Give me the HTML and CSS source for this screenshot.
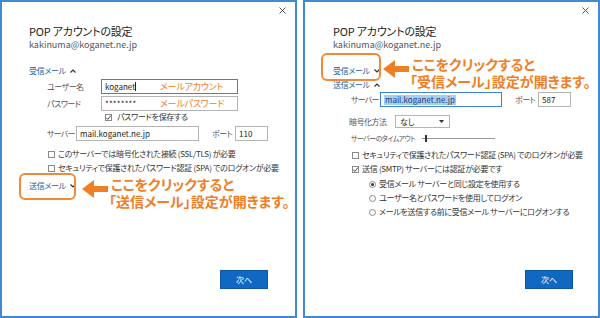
FILE: index.html
```html
<!DOCTYPE html>
<html lang="ja">
<head>
<meta charset="utf-8">
<link rel="stylesheet" href="styles.css">
</head>
<body>
<div class="screen">
  <section class="panel panel-left">
    <div class="titlebar">
      <svg class="close" width="7" height="7" viewBox="0 0 7 7"><path d="M0.5 0.5L6.5 6.5M6.5 0.5L0.5 6.5" stroke="#555" stroke-width="1" fill="none"/></svg>
    </div>
    <h1 class="title">POP アカウントの設定</h1>
    <p class="email">kakinuma@koganet.ne.jp</p>
    <div class="section-head mt16">受信メール
      <svg class="chev" width="6" height="4" viewBox="0 0 6 4"><path d="M0.5 3.5L3 1L5.5 3.5" stroke="#333" stroke-width="1.2" fill="none"/></svg>
    </div>
    <div class="row mt3">
      <span class="label lw-user">ユーザー名</span>
      <span class="input focus iw-user">koganet<span class="caret"></span><span class="note">メールアカウント</span></span>
    </div>
    <div class="row mt2">
      <span class="label lw-user">パスワード</span>
      <span class="input iw-user"><span class="dots">********</span><span class="note">メールパスワード</span></span>
    </div>
    <div class="check-row mt1 ind-save">
      <span class="box checked"><svg width="7" height="7" viewBox="0 0 7 7"><path d="M1 3.6L2.8 5.4L6 1.5" stroke="#333" stroke-width="0.9" fill="none"/></svg></span>
      <span class="ctext">パスワードを保存する</span>
    </div>
    <div class="row mt4">
      <span class="label lw-server">サーバー</span>
      <span class="input iw-server">mail.koganet.ne.jp</span>
      <span class="label port-label">ポート</span>
      <span class="input iw-port">110</span>
    </div>
    <div class="check-row mt8 ind-check">
      <span class="box"></span>
      <span class="ctext">このサーバーでは暗号化された接続 (SSL/TLS) が必要</span>
    </div>
    <div class="check-row mt4 ind-check">
      <span class="box"></span>
      <span class="ctext">セキュリティで保護されたパスワード認証 (SPA) でのログオンが必要</span>
    </div>
    <div class="section-head mt8">送信メール
      <svg class="chev" width="6" height="4" viewBox="0 0 6 4"><path d="M0.5 0.5L3 3L5.5 0.5" stroke="#333" stroke-width="1.2" fill="none"/></svg>
    </div>
    <div class="footer"><button class="next">次へ</button></div>

    <div class="callout-box cb-left"></div>
    <div class="callout co-left">
      <svg class="arrow" width="26" height="18" viewBox="0 0 26 18"><path d="M0 9L12 0V6H26V12H12V18Z" fill="#f07e26"/></svg>
      <div class="callout-text"><span class="l1">ここをクリックすると</span><span class="l2">「送信メール」設定が開きます。</span></div>
    </div>
  </section>

  <section class="panel panel-right">
    <div class="titlebar">
      <svg class="close" width="7" height="7" viewBox="0 0 7 7"><path d="M0.5 0.5L6.5 6.5M6.5 0.5L0.5 6.5" stroke="#555" stroke-width="1" fill="none"/></svg>
    </div>
    <h1 class="title">POP アカウントの設定</h1>
    <p class="email">kakinuma@koganet.ne.jp</p>
    <div class="section-head mt16">受信メール
      <svg class="chev" width="6" height="4" viewBox="0 0 6 4"><path d="M0.5 0.5L3 3L5.5 0.5" stroke="#333" stroke-width="1.2" fill="none"/></svg>
    </div>
    <div class="section-head mt4">送信メール
      <svg class="chev" width="6" height="4" viewBox="0 0 6 4"><path d="M0.5 3.5L3 1L5.5 3.5" stroke="#333" stroke-width="1.2" fill="none"/></svg>
    </div>
    <div class="row mt2">
      <span class="label lw-server">サーバー</span>
      <span class="input focus iw-server-r"><span class="sel">mail.koganet.ne.jp</span></span>
      <span class="label port-label">ポート</span>
      <span class="input iw-port">587</span>
    </div>
    <div class="row mt7 ind-enc">
      <span class="label lw-enc">暗号化方法</span>
      <span class="select">なし<svg width="5" height="3" viewBox="0 0 5 3"><path d="M0 0H5L2.5 3Z" fill="#333"/></svg></span>
    </div>
    <div class="row mt4 slider-row">
      <span class="label lw-timeout">サーバーのタイムアウト</span>
      <span class="slider"><span class="thumb"></span></span>
    </div>
    <div class="check-row mt7 ind-check">
      <span class="box"></span>
      <span class="ctext">セキュリティで保護されたパスワード認証 (SPA) でのログオンが必要</span>
    </div>
    <div class="check-row mt4 ind-check">
      <span class="box checked"><svg width="7" height="7" viewBox="0 0 7 7"><path d="M1 3.6L2.8 5.4L6 1.5" stroke="#333" stroke-width="0.9" fill="none"/></svg></span>
      <span class="ctext">送信 (SMTP) サーバーには認証が必要です</span>
    </div>
    <div class="check-row mt5 ind-radio">
      <span class="radio on"></span>
      <span class="ctext">受信メール サーバーと同じ設定を使用する</span>
    </div>
    <div class="check-row mt4 ind-radio">
      <span class="radio"></span>
      <span class="ctext">ユーザー名とパスワードを使用してログオン</span>
    </div>
    <div class="check-row mt4 ind-radio">
      <span class="radio"></span>
      <span class="ctext">メールを送信する前に受信メール サーバーにログオンする</span>
    </div>
    <div class="footer"><button class="next">次へ</button></div>

    <div class="callout-box cb-right"></div>
    <div class="callout co-right">
      <svg class="arrow" width="26" height="18" viewBox="0 0 26 18"><path d="M0 9L12 0V6H26V12H12V18Z" fill="#f07e26"/></svg>
      <div class="callout-text"><span class="l1">ここをクリックすると</span><span class="l2">「受信メール」設定が開きます。</span></div>
    </div>
  </section>
</div>
</body>
</html>
```

FILE: styles.css
```css
* { box-sizing: border-box; }
html, body { margin: 0; padding: 0; background: #fff; }
body {
  width: 600px;
  height: 318px;
  overflow: hidden;
  font-family: "Noto Sans CJK JP", "Noto Sans", sans-serif;
  font-feature-settings: "palt";
  color: #333;
}
.screen {
  display: flex;
  gap: 6px;
  width: 600px;
  height: 318px;
}
.panel {
  position: relative;
  width: 297px;
  height: 318px;
  border: 2px solid #3f8ad2;
  display: flex;
  flex-direction: column;
  padding-left: 27px;
}
.panel-right { padding-left: 28px; }

.titlebar {
  display: flex;
  justify-content: flex-end;
  padding-top: 5px;
  padding-right: 9px;
  height: 14px;
}
.close { display: block; }

.title {
  margin: 8px 0 0 0;
  font-size: 11px;
  line-height: 14px;
  font-weight: normal;
  color: #222;
  letter-spacing: -0.2px;
}
.email {
  margin: 1px 0 0 0;
  font-size: 9px;
  line-height: 11px;
  color: #555;
}
.section-head {
  display: flex;
  align-items: center;
  gap: 4px;
  height: 10px;
  font-size: 8px;
  line-height: 10px;
  color: #2b5c9e;
  letter-spacing: -0.3px;
}
.chev { display: block; }

.mt1 { margin-top: 1px; }
.mt2 { margin-top: 2px; }
.mt3 { margin-top: 3px; }
.mt4 { margin-top: 4px; }
.mt5 { margin-top: 5px; }
.mt7 { margin-top: 7px; }
.mt8 { margin-top: 8px; }
.mt16 { margin-top: 16px; }

.row {
  display: flex;
  align-items: center;
  margin-left: 18px;
  height: 15px;
}
.label {
  font-size: 8px;
  line-height: 10px;
  color: #555;
  letter-spacing: -0.5px;
  white-space: nowrap;
}
.lw-user { width: 54px; }
.lw-server { width: 29px; letter-spacing: -0.8px; }
.port-label { width: 23px; margin-left: 13px; }
.lw-enc { width: 46px; }
.lw-timeout { width: 71px; font-size: 7px; letter-spacing: -0.6px; }
.ind-enc { margin-left: 16px; }

.input {
  position: relative;
  display: flex;
  align-items: center;
  height: 15px;
  border: 1px solid #b4b4b4;
  background: #fff;
  font-size: 8px;
  color: #222;
  padding-left: 3px;
  white-space: nowrap;
}
.input.focus { border-color: #3b83d6; }
.iw-user { width: 137px; }
.iw-server { width: 123px; }
.iw-server-r { width: 122px; }
.iw-port { width: 33px; }
.caret {
  display: inline-block;
  width: 1px;
  height: 9px;
  background: #222;
}
.dots { letter-spacing: 0.2px; font-size: 8px; }
.note {
  position: absolute;
  left: 58px;
  top: 1px;
  font-size: 9px;
  line-height: 11px;
  color: #f07e26;
  letter-spacing: -0.2px;
}
.sel {
  background: #a6cdf2;
  color: #1d3f6c;
  padding: 0 1px;
  line-height: 10px;
}

.check-row {
  display: flex;
  align-items: center;
  gap: 3px;
  height: 10px;
}
.ind-save { margin-left: 76px; }
.ind-check { margin-left: 19px; }
.ind-radio { margin-left: 36px; }
.ind-save .ctext { margin-left: 2px; }
.box {
  display: flex;
  align-items: center;
  justify-content: center;
  width: 7px;
  height: 7px;
  border: 1px solid #8a8a8a;
  background: #fff;
  flex: none;
}
.box svg { display: block; flex: none; }
.radio {
  width: 7px;
  height: 7px;
  border: 1px solid #8a8a8a;
  border-radius: 50%;
  flex: none;
  display: flex;
  align-items: center;
  justify-content: center;
}
.radio.on::after {
  content: "";
  width: 3px;
  height: 3px;
  border-radius: 50%;
  background: #333;
}
.ctext {
  font-size: 8px;
  line-height: 10px;
  color: #333;
  white-space: nowrap;
  letter-spacing: -0.3px;
}

.select {
  display: flex;
  align-items: center;
  justify-content: space-between;
  width: 55px;
  height: 13px;
  border: 1px solid #b4b4b4;
  font-size: 8px;
  color: #222;
  padding: 0 5px 0 4px;
}
.select svg { display: block; }

.slider-row { height: 10px; }
.slider {
  position: relative;
  width: 73px;
  height: 1px;
  background: #999;
}
.thumb {
  position: absolute;
  left: 3px;
  top: -3px;
  width: 2px;
  height: 7px;
  background: #333;
}

.footer {
  margin-top: auto;
  display: flex;
  justify-content: flex-end;
  padding-right: 27px;
  padding-bottom: 27px;
}
.panel-right .footer { padding-right: 25px; }
.next {
  width: 48px;
  height: 19px;
  border: 1px solid #0b57a4;
  background: #1068c2;
  color: #fff;
  font-family: "Noto Sans CJK JP", sans-serif;
  font-size: 8px;
  padding: 0;
}

.callout-box {
  position: absolute;
  border: 2px solid #f08a3a;
  border-radius: 6px;
}
.cb-left { left: 17px; top: 171px; width: 57px; height: 27px; }
.cb-right { left: 16px; top: 51px; width: 60px; height: 28px; }

.callout {
  position: absolute;
  display: flex;
  align-items: flex-start;
  gap: 3px;
}
.co-left { left: 80px; top: 174px; }
.co-right { left: 78px; top: 54px; }
.arrow { display: block; margin-top: 4px; flex: none; }
.callout-text {
  display: flex;
  flex-direction: column;
  color: #f07e26;
  font-size: 14px;
  line-height: 17px;
  font-weight: bold;
  white-space: nowrap;
}
.callout-text .l2 { margin-left: -2px; }
```
